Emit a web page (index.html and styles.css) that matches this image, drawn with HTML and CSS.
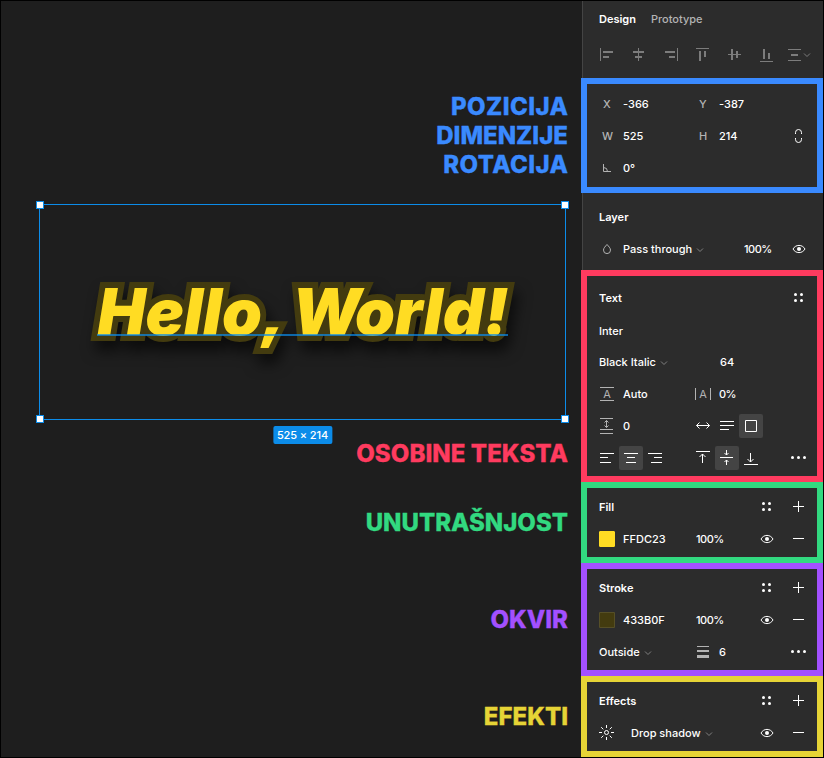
FILE: index.html
```html
<!DOCTYPE html>
<html lang="sr-Latn">
<head>
<meta charset="utf-8">
<title>Design panel</title>
<link rel="stylesheet" href="styles.css">
</head>
<body>
<svg class="defs" width="0" height="0" aria-hidden="true">
  <symbol id="eye" viewBox="0 0 32 32"><path d="M10 16c1.400-2.400 3.500-3.600 6-3.600s4.600 1.200 6 3.600c-1.400 2.400-3.500 3.600-6 3.600s-4.600-1.200-6-3.600z" fill="none" stroke="currentColor"/><circle cx="16" cy="16" r="2" fill="currentColor"/></symbol>
  <symbol id="dots" viewBox="0 0 32 32"><g fill="currentColor"><circle cx="12.500" cy="12.500" r="1.500"/><circle cx="18.500" cy="12.500" r="1.500"/><circle cx="12.500" cy="18.500" r="1.500"/><circle cx="18.500" cy="18.500" r="1.500"/></g></symbol>
  <symbol id="plus" viewBox="0 0 32 32"><path d="M10 15.500h11M15.500 10v11" stroke="currentColor"/></symbol>
  <symbol id="minus" viewBox="0 0 32 32"><path d="M10 15.500h11" stroke="currentColor"/></symbol>
  <symbol id="more" viewBox="0 0 32 32"><g fill="currentColor"><circle cx="9.500" cy="15.500" r="1.500"/><circle cx="15.500" cy="15.500" r="1.500"/><circle cx="21.500" cy="15.500" r="1.500"/></g></symbol>
  <symbol id="chev" viewBox="0 0 8 6"><path d="M1 1.500l3 3 3-3" fill="none" stroke="currentColor"/></symbol>
</svg>
<div class="app">
  <main class="canvas">
    <div class="note position"><span class="loose">POZICIJA</span><br>DIMENZIJE<br><span class="loose">ROTACIJA</span></div>
    <div class="frame">
      <svg class="hello" viewBox="0 0 525 214">
        <defs><text id="hello" x="263" y="129.500" text-anchor="middle">Hello, <tspan dx="-3">W</tspan><tspan dx="-3">orld!</tspan></text></defs>
        <use class="outline" href="#hello"/>
        <use href="#hello"/>
      </svg>
      <i class="handle tl"></i><i class="handle tr"></i><i class="handle bl"></i><i class="handle br"></i>
      <span class="size">525 × 214</span>
    </div>
    <div class="note text">OSOBINE TEKSTA</div>
    <div class="note fill">UNUTRAŠNJOST</div>
    <div class="note stroke">OKVIR</div>
    <div class="note effects">EFEKTI</div>
  </main>
  <aside class="panel">
    <section class="plain head">
      <nav class="tabs"><b>Design</b><span>Prototype</span></nav>
      <div class="row aligns">
        <svg class="ic" viewBox="0 0 32 32"><path d="M9 9h1v13H9zM12 12h10v2H12zM12 17h6v2h-6z"/></svg>
        <svg class="ic" viewBox="0 0 32 32"><path d="M15 9h1v13h-1zM10 12h11v2H10zM12 17h7v2h-7z"/></svg>
        <svg class="ic" viewBox="0 0 32 32"><path d="M22 9h1v13h-1zM10 12h10v2H10zM14 17h6v2h-6z"/></svg>
        <svg class="ic" viewBox="0 0 32 32"><path d="M9 9h13v1H9zM12 12h2v10h-2zM17 12h2v6h-2z"/></svg>
        <svg class="ic" viewBox="0 0 32 32"><path d="M9 15h13v1H9zM12 10h2v11h-2zM17 12h2v7h-2z"/></svg>
        <svg class="ic" viewBox="0 0 32 32"><path d="M9 22h13v1H9zM12 10h2v10h-2zM17 14h2v6h-2z"/></svg>
        <svg class="ic" viewBox="0 0 32 32"><path d="M5 10h13v1H5zM8 15h7v2H8zM5 21h13v1H5z"/><path d="M21 14.500l3 3 3-3" fill="none" stroke="currentColor"/></svg>
      </div>
    </section>

    <section class="box position">
      <div class="row"><span class="key">X</span><span>-366</span><span class="key">Y</span><span>-387</span></div>
      <div class="row"><span class="key wkey">W</span><span>525</span><span class="key">H</span><span>214</span>
        <svg class="ic last" viewBox="0 0 32 32"><path class="ln" d="M12.500 14v-1.500a3 3 0 0 1 6 0V14M12.500 18v1.500a3 3 0 0 0 6 0V18"/></svg></div>
      <div class="row"><svg class="ic dim" viewBox="0 0 32 32"><path class="ln" d="M12.500 12v7.500H20M12.500 15.500a4 4 0 0 1 4 4"/></svg><span>0°</span></div>
    </section>

    <section class="plain layer">
      <div class="row"><b class="title">Layer</b></div>
      <div class="row"><svg class="ic dim" viewBox="0 0 32 32"><path class="ln" d="M16 11.500c1.600 1.900 3.500 3.500 3.500 5.600a3.500 3.500 0 0 1-7 0c0-2.100 1.900-3.700 3.500-5.600z"/></svg>
        <span class="wide">Pass through<svg class="chev"><use href="#chev"/></svg></span>
        <span class="opacity">100%</span>
        <svg class="ic last"><use href="#eye"/></svg></div>
    </section>

    <section class="box text">
      <div class="row"><b class="title">Text</b><svg class="ic last"><use href="#dots"/></svg></div>
      <div class="row"><span class="title family">Inter</span></div>
      <div class="row"><span class="title">Black Italic<svg class="chev"><use href="#chev"/></svg></span><span class="second">64</span></div>
      <div class="row">
        <svg class="ic dim" viewBox="0 0 32 32"><path class="ln" d="M9 9.500h14M9 22.500h14"/><text x="16" y="20" text-anchor="middle">A</text></svg><span>Auto</span>
        <svg class="ic dim" viewBox="0 0 32 32"><path class="ln" d="M8.500 10v12M23.500 10v12"/><text x="16" y="20" text-anchor="middle">A</text></svg><span class="tight">0%</span></div>
      <div class="row">
        <svg class="ic dim" viewBox="0 0 32 32"><path class="ln" d="M9 8.500h13M9 19.500h13M9 23.500h13M15.500 10.500v7M13.500 12.500l2-2 2 2M13.500 15.500l2 2 2-2"/></svg><span>0</span>
        <div class="seg sizing">
          <svg viewBox="0 0 24 24"><path class="ln" d="M5.500 11.500h13M8.500 8.500l-3 3 3 3M15.500 8.500l3 3-3 3"/></svg>
          <svg viewBox="0 0 24 24"><path class="ln" d="M5 7.500h14M5 11.500h14M5 15.500h9"/></svg>
          <svg class="on" viewBox="0 0 24 24"><path class="ln" d="M6.500 6.500h11v11h-11z"/></svg>
        </div></div>
      <div class="row">
        <div class="seg halign">
          <svg viewBox="0 0 24 24"><path class="ln" d="M5 7.500h14M5 11.500h8M5 16.500h11"/></svg>
          <svg class="on" viewBox="0 0 24 24"><path class="ln" d="M5 7.500h14M8 11.500h8M7 16.500h10"/></svg>
          <svg viewBox="0 0 24 24"><path class="ln" d="M5 7.500h14M11 11.500h8M8 16.500h11"/></svg>
        </div>
        <div class="seg valign">
          <svg viewBox="0 0 24 24"><path class="ln" d="M5 5.500h14M11.500 17V8M8.500 11l3-3 3 3"/></svg>
          <svg class="on" viewBox="0 0 24 24"><path class="ln" d="M5 11.500h13M11.500 4v5M9.500 7l2 2 2-2M11.500 19v-5M9.500 16l2-2 2 2"/></svg>
          <svg viewBox="0 0 24 24"><path class="ln" d="M5 18.500h14M11.500 7v9M8.500 13l3 3 3-3"/></svg>
        </div>
        <svg class="ic last"><use href="#more"/></svg></div>
    </section>

    <section class="box fill">
      <div class="row"><b class="title">Fill</b><svg class="ic prev"><use href="#dots"/></svg><svg class="ic last"><use href="#plus"/></svg></div>
      <div class="row"><i class="swatch yellow"></i><span>FFDC23</span><span class="percent">100%</span><svg class="ic prev"><use href="#eye"/></svg><svg class="ic last"><use href="#minus"/></svg></div>
    </section>

    <section class="box stroke">
      <div class="row"><b class="title">Stroke</b><svg class="ic prev"><use href="#dots"/></svg><svg class="ic last"><use href="#plus"/></svg></div>
      <div class="row"><i class="swatch brown"></i><span>433B0F</span><span class="percent">100%</span><svg class="ic prev"><use href="#eye"/></svg><svg class="ic last"><use href="#minus"/></svg></div>
      <div class="row"><span class="title">Outside<svg class="chev"><use href="#chev"/></svg></span>
        <svg class="ic dim weight" viewBox="0 0 32 32"><path d="M10 10h12v1H10zM10 14h12v2H10zM10 19h12v3H10z"/></svg><span>6</span><svg class="ic last"><use href="#more"/></svg></div>
    </section>

    <section class="box effects">
      <div class="row"><b class="title">Effects</b><svg class="ic prev"><use href="#dots"/></svg><svg class="ic last"><use href="#plus"/></svg></div>
      <div class="row"><svg class="ic" viewBox="0 0 32 32"><circle class="ln" cx="15.500" cy="15.500" r="2"/><path class="ln" d="M15.500 8v3M15.500 20v3M8 15.500h3M20 15.500h3M10.200 10.200l2.100 2.100M18.700 18.700l2.100 2.100M10.200 20.800l2.100-2.100M18.700 12.300l2.100-2.100"/></svg>
        <span class="wide effect">Drop shadow<svg class="chev"><use href="#chev"/></svg></span><svg class="ic prev"><use href="#eye"/></svg><svg class="ic last"><use href="#minus"/></svg></div>
    </section>
  </aside>
</div>
</body>
</html>
```
FILE: styles.css
```css
* { box-sizing: border-box; }

body {
  margin: 0;
  font: 500 11px/16px Inter, "Liberation Sans", sans-serif;
  color: #fff;
  background: #000;
}

.defs { position: absolute; }

.app {
  display: grid;
  grid-template-columns: 580px 242px;
  width: 824px;
  height: 758px;
  border: 1px solid #000;
  background: #1e1e1e;
  overflow: hidden;
}

.position { --accent: #3a8aff; }
.text { --accent: #ff3b5f; }
.fill { --accent: #32d980; }
.stroke { --accent: #a350ff; }
.effects { --accent: #e6d436; }

/* canvas */
.canvas {
  display: flex;
  flex-direction: column;
  padding: 91px 13px 0 38px;
}

.note {
  font-size: 24px;
  font-weight: 800;
  line-height: 29px;
  text-align: right;
  white-space: nowrap;
  color: var(--accent);
  -webkit-text-stroke: .3px var(--accent);
}
.loose { margin-right: -.4px; letter-spacing: .4px; }
.note.position { margin-bottom: 25px; }
.note.text { margin-top: 19px; letter-spacing: .07px; }
.note.fill { margin-top: 40px; }
.note.stroke { margin-top: 68px; }
.note.effects { margin-top: 68px; }

.frame {
  position: relative;
  flex: none;
  width: 527px;
  height: 216px;
  border: 1px solid #0c8ce9;
}

.hello {
  display: block;
  width: 525px;
  height: 214px;
  font-size: 64px;
  font-style: italic;
  font-weight: 900;
  fill: #ffdc23;
  filter: drop-shadow(4px 10px 7px rgba(0, 0, 0, .6));
}
.outline { fill: #433b0f; stroke: #433b0f; stroke-width: 12px; }
.frame::after {
  content: "";
  position: absolute;
  left: 57px;
  top: 129px;
  width: 411px;
  height: 2px;
  background: rgba(12, 140, 233, .7);
}

.handle {
  position: absolute;
  width: 8px;
  height: 8px;
  border: 1px solid #0c8ce9;
  background: #fff;
}
.tl { left: -4px; top: -4px; }
.tr { right: -4px; top: -4px; }
.bl { left: -4px; bottom: -4px; }
.br { right: -4px; bottom: -4px; }

.size {
  position: absolute;
  top: 221px;
  left: 50%;
  transform: translateX(-50%);
  padding: 1px 4px 0;
  border-radius: 2px;
  letter-spacing: -.1px;
  line-height: 17px;
  white-space: nowrap;
  background: #0c8ce9;
}

/* panel */
.panel { display: flex; flex-direction: column; }

.plain {
  margin-left: 1px;
  padding-left: 8px;
  border-left: 1px solid #444;
  background: #2c2c2c;
}
.head { height: 77px; }
.layer { height: 77px; padding-top: 8px; }

.tabs {
  display: flex;
  gap: 15px;
  height: 38px;
  padding: 10px 0 0 8px;
}
.tabs span { color: #b3b3b3; }
b { font-weight: 600; }

.box {
  border: 6px solid var(--accent);
  padding: 3px 0 2px 4px;
  background: #2c2c2c;
}
.box.position { padding: 4px 0 3px 4px; }
.box.text { padding-top: 6px; }
.box.fill, .box.effects { height: 81px; }
.box.stroke { height: 113px; }

.row {
  display: grid;
  grid-template-columns: 32px 64px repeat(4, 32px);
  grid-template-rows: 32px;
  align-items: center;
}
.row.aligns { grid-template-columns: repeat(7, 32px); color: #7c7c7c; }

.ic { display: block; width: 32px; height: 32px; fill: currentColor; }
.ic text { font-size: 11px; font-weight: 400; }
.dim { color: #b3b3b3; }
.ln { fill: none; stroke: currentColor; }
.chev { width: 8px; height: 6px; margin-left: 4px; color: #808080; }

.key { padding-left: 12px; color: #b3b3b3; }
.wkey { padding-left: 11px; }
.title { grid-column: 1 / 3; padding-left: 8px; white-space: nowrap; }
.family { padding-top: 2px; }
.wide { grid-column: 2 / 4; white-space: nowrap; }
.effect { padding-left: 8px; }
.opacity { grid-column: 4 / 6; padding-left: 25px; }
.second { grid-column: 4; padding-left: 1px; }
.percent { grid-column: 3 / 5; padding-left: 9px; }
.opacity, .percent, .tight { letter-spacing: -.5px; }
.weight { grid-column: 3; }
.prev { grid-column: 5; }
.last { grid-column: 6; }

.seg { display: flex; }
.seg svg { width: 24px; height: 24px; }
.seg .on { border-radius: 2px; background: #444; }
.sizing, .valign { grid-column: 3 / 6; padding-left: 4px; }
.halign { grid-column: 1 / 3; padding-left: 4px; }

.swatch {
  width: 16px;
  height: 16px;
  margin-left: 8px;
  border: 1px solid rgba(255, 255, 255, .1);
  border-radius: 1px;
}
.yellow { background: #ffdc23; border-color: #ffdc23; }
.brown { background: #433b0f; }
```
